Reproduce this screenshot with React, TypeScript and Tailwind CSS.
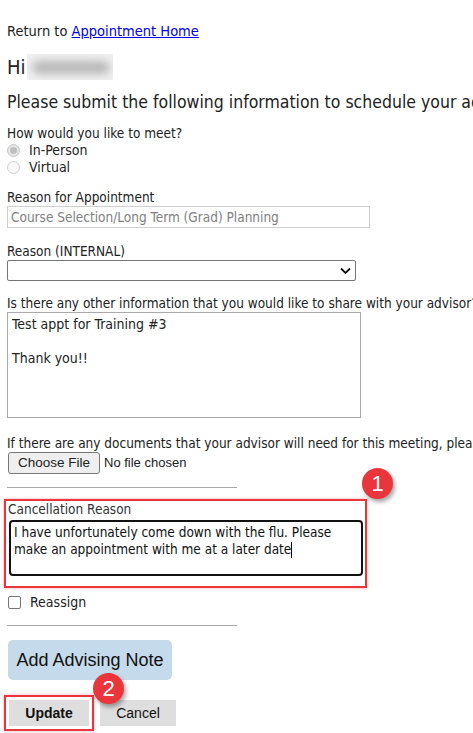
import React from "react";

const body = { fontFamily: '"DejaVu Sans Condensed", "DejaVu Sans", Tahoma, sans-serif' };
const arial = { fontFamily: '"Liberation Sans", Arial, sans-serif' };

function Badge({ n }: { n: string }) {
  return (
    <div
      className="absolute w-[31px] h-[31px] rounded-full bg-[#e8363c] text-white flex items-center justify-center text-[22px] shadow-[2px_3px_4px_rgba(0,0,0,0.35)]"
      style={arial}
    >
      {n}
    </div>
  );
}

export default function App() {
  return (
    <div className="w-[473px] h-[733px] overflow-hidden bg-white text-[#222]" style={body}>
      <div className="pl-[7px] pt-[22px] relative">
        <div className="text-[14.5px] leading-[18px] whitespace-nowrap">
          Return to <a href="#" className="text-[#0000ee] underline">Appointment Home</a>
        </div>
        <div className="mt-[14px] flex items-center h-[26px] text-[20px]">
          <span>Hi</span>
          <span className="relative inline-block w-[86px] h-[26px] ml-[1px] bg-[#f0f0f0] overflow-hidden">
            <span className="absolute left-[5px] top-[7px] w-[78px] h-[13px] bg-[#b8b8b8] blur-[4px] rounded-full" />
          </span>
        </div>
        <div className="mt-[11px] text-[17.5px] leading-[22px] whitespace-nowrap">
          Please submit the following information to schedule your advising appointment
        </div>
        <div className="mt-[12px] text-[13.5px] leading-[17px] whitespace-nowrap">How would you like to meet?</div>
        <div className="flex items-center h-[17px] text-[14px]">
          <span className="w-[13px] h-[13px] rounded-full border border-[#c8c8c8] bg-[#e6e6e6] flex items-center justify-center mr-[9px]">
            <span className="w-[7px] h-[7px] rounded-full bg-[#c0c0c0]" />
          </span>
          In-Person
        </div>
        <div className="flex items-center h-[17px] text-[14px]">
          <span className="w-[13px] h-[13px] rounded-full border border-[#cfcfcf] bg-[#f8f8f8] mr-[9px]" />
          Virtual
        </div>
        <div className="mt-[13px] text-[13.5px] leading-[17px]">Reason for Appointment</div>
        <div className="w-[363px] h-[22px] border border-[#cfcfcf] text-[13.5px] text-[#808080] pl-[3px] flex items-center whitespace-nowrap">
          Course Selection/Long Term (Grad) Planning
        </div>
        <div className="mt-[15px] text-[13.5px] leading-[17px]">Reason (INTERNAL)</div>
        <div className="w-[349px] h-[21px] border border-[#767676] rounded-[2px] flex items-center justify-end pr-[4px]">
          <svg width="11" height="8" viewBox="0 0 11 8">
            <path d="M1 1.5 L5.5 6 L10 1.5" fill="none" stroke="#111" strokeWidth="1.8" />
          </svg>
        </div>
        <div className="mt-[14px] text-[13.5px] leading-[17px] whitespace-nowrap">
          Is there any other information that you would like to share with your advisor?
        </div>
        <div className="w-[354px] h-[106px] border border-[#aaa] text-[14px] leading-[17px] pl-[4px] pt-[3px]">
          <div>Test appt for Training #3</div>
          <div className="mt-[17px]">Thank you!!</div>
        </div>
        <div className="mt-[17px] text-[13.5px] leading-[17px] whitespace-nowrap">
          If there are any documents that your advisor will need for this meeting, please upload them here
        </div>
        <div className="flex items-center h-[22px] mt-[0px]">
          <span
            className="h-[22px] w-[92px] ml-[1px] border border-[#767676] rounded-[3px] bg-[#efefef] text-[13.5px] flex items-center justify-center"
            style={arial}
          >
            Choose File
          </span>
          <span className="ml-[4px] text-[13px]" style={arial}>No file chosen</span>
        </div>
        <div className="mt-[13px] w-[230px] h-px bg-[#aaa]" />
        <div className="mt-[11px] relative -ml-[3px] w-[363px] h-[89px] border-2 border-[#e8363c] shadow-[0_0_3px_rgba(232,54,60,0.4)] pl-[2px]">
          <div className="text-[13.5px] leading-[15px] text-[#333] mt-[1px]">Cancellation Reason</div>
          <div className="mt-[3px] ml-[1px] w-[354px] h-[56px] border-2 border-[#111] rounded-[4px] text-[13.5px] leading-[17px] pl-[3px] pt-[2px] text-[#111]">
            I have unfortunately come down with the flu. Please make an appointment with me at a later date
            <span className="inline-block w-px h-[16px] bg-black align-middle" />
          </div>
        </div>
        <div className="mt-[6px] flex items-center h-[17px] text-[14px]">
          <span className="w-[13px] h-[13px] rounded-[2px] border border-[#767676] mr-[9px] ml-[1px]" />
          Reassign
        </div>
        <div className="mt-[14px] w-[230px] h-px bg-[#aaa]" />
        <div
          className="mt-[14px] ml-[1px] w-[164px] h-[40px] rounded-[5px] bg-[#c5daeb] text-[18px] flex items-center justify-center text-[#111]"
          style={arial}
        >
          Add Advising Note
        </div>
        <div className="mt-[15px] flex items-center">
          <div className="-ml-[3px] border-2 border-[#e8363c] p-[3px] shadow-[0_0_3px_rgba(232,54,60,0.4)]">
            <div className="w-[80px] h-[26px] bg-[#dedede] text-[14px] font-bold flex items-center justify-center text-[#111]" style={arial}>
              Update
            </div>
          </div>
          <div className="ml-[6px] w-[76px] h-[26px] bg-[#dedede] text-[14px] flex items-center justify-center text-[#111]" style={arial}>
            Cancel
          </div>
        </div>
        <div className="absolute left-[362px] top-[468px]"><Badge n="1" /></div>
        <div className="absolute left-[93px] top-[673px]"><Badge n="2" /></div>
      </div>
    </div>
  );
}
